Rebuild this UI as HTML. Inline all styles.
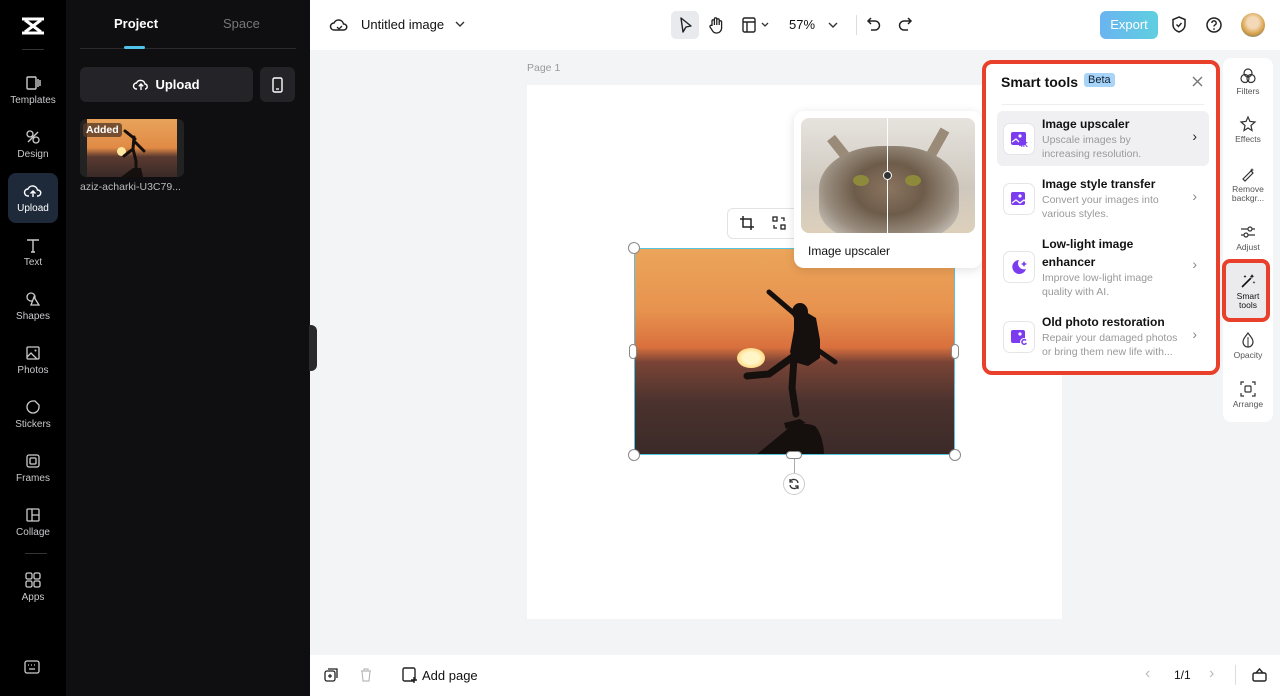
<!DOCTYPE html>
<html><head><meta charset="utf-8"><style>
*{margin:0;padding:0;box-sizing:border-box}
body{width:1280px;height:696px;overflow:hidden;font-family:"Liberation Sans",sans-serif;background:#f3f4f6;position:relative}
.a{position:absolute}
.nav{left:0;top:0;width:66px;height:696px;background:#000}
.ni{position:absolute;left:0;width:66px;text-align:center;color:#c9c9cc;font-size:10px}
.ni svg{display:block;margin:0 auto 4px}
.panel{left:66px;top:0;width:244px;height:696px;background:#0f0f11}
.top{left:310px;top:0;width:970px;height:50px;background:#fff}
.bot{left:310px;top:655px;width:970px;height:41px;background:#fff}
svg{overflow:visible}
.rs{position:absolute;left:0;width:50px;text-align:center;font-size:8.5px;color:#555;line-height:9px}
.rs svg{display:block;margin:0 auto 3px}
.it{position:absolute;left:16px;width:212px;height:55px;border-radius:6px}
.ic{position:absolute;left:6px;top:12px;width:32px;height:32px;border:1px solid #e5e5e8;border-radius:7px;background:#fff}
.t1{position:absolute;left:45px;font-size:12px;color:#111;font-weight:bold;line-height:18px}
.t2{position:absolute;left:45px;font-size:10.5px;color:#999;line-height:14px}
.chev{position:absolute;right:12px;font-size:14px;color:#888}
</style></head><body>
<div class="a nav">
 <svg class="a" style="left:20px;top:17px" width="26" height="18" viewBox="0 0 26 18"><path d="M2 2h22M2 16h22M5 3l16 12M21 3L5 15" fill="none" stroke="#fff" stroke-width="3"/></svg>
 <div class="a" style="left:22px;top:49px;width:22px;height:1px;background:#333"></div>
 <div class="ni" style="top:75px"><svg width="16" height="16"><rect x="2" y="2" width="9" height="12" rx="1" fill="none" stroke="#ccc" stroke-width="1.4"/><path d="M13 4v8M15 5v6" stroke="#ccc" stroke-width="1.4"/></svg>Templates</div>
 <div class="ni" style="top:129px"><svg width="16" height="16"><circle cx="5" cy="5" r="3" fill="none" stroke="#ccc" stroke-width="1.3"/><circle cx="11" cy="11" r="3" fill="none" stroke="#ccc" stroke-width="1.3"/><path d="M3 13L13 3" stroke="#ccc" stroke-width="1.3"/></svg>Design</div>
 <div class="a" style="left:8px;top:173px;width:50px;height:50px;border-radius:8px;background:#1e2a3a"></div>
 <div class="ni" style="top:183px;color:#fff"><svg width="18" height="16"><path d="M5 13H4a3.5 3.5 0 010-7 5 5 0 019.5 1A3 3 0 0114 13h-1M9 14V8M6.5 10.5L9 8l2.5 2.5" fill="none" stroke="#fff" stroke-width="1.4"/></svg>Upload</div>
 <div class="ni" style="top:237px"><svg width="16" height="16"><path d="M2 3h12M8 3v12M6 15h4" stroke="#ccc" stroke-width="1.4" fill="none"/></svg>Text</div>
 <div class="ni" style="top:291px"><svg width="16" height="16"><circle cx="6" cy="6" r="4" fill="none" stroke="#ccc" stroke-width="1.3"/><path d="M9 6l5 8H6z" fill="#000" stroke="#ccc" stroke-width="1.3"/></svg>Shapes</div>
 <div class="ni" style="top:345px"><svg width="16" height="16"><rect x="2" y="2" width="12" height="12" rx="1" fill="none" stroke="#ccc" stroke-width="1.3"/><path d="M2 12l4-4 6 6" fill="none" stroke="#ccc" stroke-width="1.3"/><circle cx="10.5" cy="5.5" r="1" fill="#ccc"/></svg>Photos</div>
 <div class="ni" style="top:399px"><svg width="16" height="16"><path d="M14 8A6 6 0 118 2h2l4 4z" fill="none" stroke="#ccc" stroke-width="1.3"/></svg>Stickers</div>
 <div class="ni" style="top:453px"><svg width="16" height="16"><rect x="2" y="2" width="12" height="12" rx="2" fill="none" stroke="#ccc" stroke-width="1.3"/><rect x="5" y="5" width="6" height="6" rx="1" fill="none" stroke="#ccc" stroke-width="1.3"/></svg>Frames</div>
 <div class="ni" style="top:507px"><svg width="16" height="16"><rect x="2" y="2" width="12" height="12" rx="1" fill="none" stroke="#ccc" stroke-width="1.3"/><path d="M7 2v12M7 8h7" stroke="#ccc" stroke-width="1.3"/></svg>Collage</div>
 <div class="a" style="left:25px;top:553px;width:22px;height:1px;background:#333"></div>
 <div class="ni" style="top:572px"><svg width="16" height="16"><rect x="1" y="1" width="6" height="6" rx="1.5" fill="none" stroke="#ccc" stroke-width="1.3"/><rect x="9" y="1" width="6" height="6" rx="1.5" fill="none" stroke="#ccc" stroke-width="1.3"/><rect x="1" y="9" width="6" height="6" rx="1.5" fill="none" stroke="#ccc" stroke-width="1.3"/><rect x="9" y="9" width="6" height="6" rx="1.5" fill="none" stroke="#ccc" stroke-width="1.3"/></svg>Apps</div>
 <svg class="a" style="left:24px;top:660px" width="16" height="14"><rect x="1" y="1" width="14" height="12" rx="2" fill="none" stroke="#ccc" stroke-width="1.3"/><path d="M4 5h1M7 5h1M10 5h1M5 9h6" stroke="#ccc" stroke-width="1.3"/></svg>
</div>
<div class="a panel">
 <div class="a" style="left:48px;top:16px;font-size:13px;font-weight:bold;color:#fff">Project</div>
 <div class="a" style="left:157px;top:16px;font-size:13px;color:#777">Space</div>
 <div class="a" style="left:14px;top:48px;width:216px;height:1px;background:#2a2a2e"></div>
 <div class="a" style="left:58px;top:46px;width:21px;height:3px;border-radius:2px;background:#4fc3e8"></div>
 <div class="a" style="left:14px;top:67px;width:173px;height:35px;border-radius:6px;background:#242428;color:#fff;font-size:13px;font-weight:bold;line-height:35px;text-align:center"><svg width="16" height="14" style="vertical-align:-2px;margin-right:6px"><path d="M4 12H3.5a3 3 0 010-6 4.5 4.5 0 018.5 1A2.6 2.6 0 0112.5 12H12M8 13V7M5.8 9.2L8 7l2.2 2.2" fill="none" stroke="#fff" stroke-width="1.4"/></svg>Upload</div>
 <div class="a" style="left:194px;top:67px;width:35px;height:35px;border-radius:6px;background:#242428"><svg class="a" style="left:12px;top:10px" width="11" height="16"><rect x="1" y="1" width="9" height="14" rx="1.5" fill="none" stroke="#fff" stroke-width="1.4"/><path d="M4 12h3" stroke="#fff" stroke-width="1.3"/></svg></div>
 <div class="a" style="left:14px;top:119px;width:104px;height:58px;border-radius:6px;background:#222;overflow:hidden">
  <div class="a" style="left:7px;top:0;width:90px;height:58px;background:linear-gradient(#e8a35a 0%,#e08a45 50%,#5a3a30 65%,#3a2a28 100%)"></div>
  <div class="a" style="left:37px;top:28px;width:9px;height:9px;border-radius:50%;background:#ffe9a0"></div>
  <svg class="a" style="left:7px;top:0" width="90" height="58"><path d="M34 58l12-9 8 0 2 9z" fill="#150f0e"/><path d="M38 12l10 8M47 18l-1 12 3 12 0 7M46 30l-9 7M47 22l10 10" stroke="#150f0e" stroke-width="3" fill="none" stroke-linecap="round"/></svg>
  <div class="a" style="left:3px;top:4px;padding:1px 3px;background:rgba(90,60,40,.8);border-radius:3px;color:#fff;font-size:10.5px;font-weight:bold">Added</div>
 </div>
 <div class="a" style="left:14px;top:181px;font-size:10.5px;color:#bbb">aziz-acharki-U3C79...</div>
 <div class="a" style="left:243px;top:325px;width:8px;height:46px;background:#2a2a2e;border-radius:0 6px 6px 0"></div>
</div>
<div class="a top">
 <svg class="a" style="left:20px;top:17px" width="18" height="16"><path d="M5 13H4a3.5 3.5 0 010-7 5 5 0 019.5 1A3 3 0 0114 13H5" fill="none" stroke="#222" stroke-width="1.5"/><path d="M7 10l2 2 3-3" fill="none" stroke="#222" stroke-width="1.3"/></svg>
 <div class="a" style="left:51px;top:17px;font-size:13px;color:#111">Untitled image</div>
 <svg class="a" style="left:145px;top:21px" width="10" height="6"><path d="M1 1l4 4 4-4" fill="none" stroke="#333" stroke-width="1.4"/></svg>
 <div class="a" style="left:361px;top:11px;width:28px;height:28px;border-radius:5px;background:#e8eaee"></div>
 <svg class="a" style="left:369px;top:17px" width="14" height="16"><path d="M2 1l10 8-5 1-3 5z" fill="none" stroke="#222" stroke-width="1.4" stroke-linejoin="round"/></svg>
 <svg class="a" style="left:398px;top:16px" width="16" height="18"><path d="M4 10V5a1.2 1.2 0 012.4 0v4V3a1.2 1.2 0 012.4 0v6V4a1.2 1.2 0 012.4 0v5-3a1.2 1.2 0 012.4 0v6a5 5 0 01-5 5H8a4 4 0 01-3-1.5L2 11a1.3 1.3 0 012-1.5z" fill="none" stroke="#222" stroke-width="1.3"/></svg>
 <svg class="a" style="left:432px;top:17px" width="30" height="16"><rect x="1" y="1" width="12" height="14" rx="1.5" fill="none" stroke="#222" stroke-width="1.4"/><path d="M1 5h12M5 5v10" stroke="#222" stroke-width="1.4"/><path d="M20 6l3 3 3-3" fill="none" stroke="#333" stroke-width="1.3"/></svg>
 <div class="a" style="left:479px;top:17px;font-size:13px;color:#111">57%</div>
 <svg class="a" style="left:518px;top:22px" width="10" height="6"><path d="M1 1l4 4 4-4" fill="none" stroke="#333" stroke-width="1.4"/></svg>
 <div class="a" style="left:546px;top:15px;width:1px;height:20px;background:#ddd"></div>
 <svg class="a" style="left:557px;top:16px" width="14" height="16"><path d="M4 2L1 5l3 3M1 5h7a4.5 4.5 0 010 9H4" fill="none" stroke="#222" stroke-width="1.5"/></svg>
 <svg class="a" style="left:588px;top:16px" width="14" height="16"><path d="M10 2l3 3-3 3M13 5H6a4.5 4.5 0 000 9h4" fill="none" stroke="#222" stroke-width="1.5"/></svg>
 <div class="a" style="left:790px;top:11px;width:58px;height:28px;border-radius:6px;background:linear-gradient(90deg,#6ab4f0,#5fcfe0);color:#fff;font-size:13px;line-height:28px;text-align:center">Export</div>
 <svg class="a" style="left:862px;top:16px" width="14" height="17"><path d="M7 1l6 2.5v5c0 4-3 6.5-6 7.5-3-1-6-3.5-6-7.5v-5z" fill="none" stroke="#222" stroke-width="1.5"/><path d="M4.5 8.5l2 2 3-3.5" fill="none" stroke="#222" stroke-width="1.4"/></svg>
 <svg class="a" style="left:896px;top:17px" width="16" height="16"><circle cx="8" cy="8" r="7" fill="none" stroke="#222" stroke-width="1.5"/><path d="M5.8 6a2.2 2.2 0 114 1.3c-.9.7-1.8 1-1.8 2.2" fill="none" stroke="#222" stroke-width="1.4"/><circle cx="8" cy="12" r=".9" fill="#222"/></svg>
 <div class="a" style="left:931px;top:13px;width:24px;height:24px;border-radius:50%;background:radial-gradient(circle at 50% 40%,#f3d9b8 30%,#d8a24a 60%,#4a6a8a)"></div>
</div>
<div class="a" style="left:527px;top:62px;font-size:10.5px;color:#999">Page 1</div>
<div class="a" style="left:527px;top:85px;width:535px;height:534px;background:#fff"></div>
<!-- image -->
<div class="a" style="left:634px;top:248px;width:321px;height:207px;background:linear-gradient(#eba55a 0%,#e7934f 30%,#d9703e 48%,#7a4436 55%,#4a322e 75%,#3b2a28 100%);overflow:hidden">
 <div class="a" style="left:103px;top:100px;width:28px;height:20px;border-radius:50%;background:radial-gradient(#fff6c8 40%,#ffd070 80%,transparent 100%)"></div>
 <svg class="a" style="left:0;top:0" width="321" height="207">
  <path d="M122 207l34-28c8-4 22-4 26 0 6 8 8 20 8 28z" fill="#150f0e"/>
  <g stroke="#150f0e" fill="none" stroke-linecap="round" stroke-linejoin="round">
   <path d="M135 44l28 24" stroke-width="5"/>
   <path d="M168 72l10 26 23 16" stroke-width="5"/>
   <path d="M160 108l-25 18-22 2" stroke-width="7"/>
   <path d="M160 110l-2 30 4 26" stroke-width="7"/>
  </g>
  <path d="M160 64l12 0 10 6 4 22 0 18-12 8-14-4-4-10 4-22z" fill="#150f0e"/>
  <ellipse cx="166" cy="64" rx="8" ry="9" fill="#150f0e"/>
  <path d="M150 175l16-4 6 4-20 6z" fill="#150f0e"/>
 </svg>
 <div class="a" style="left:0;top:0;right:0;bottom:0;border:1.5px solid #55c3e0"></div>
</div>
<div class="a" style="left:628px;top:242px;width:12px;height:12px;border-radius:50%;background:#fff;border:1px solid #888"></div>
<div class="a" style="left:949px;top:449px;width:12px;height:12px;border-radius:50%;background:#fff;border:1px solid #888"></div>
<div class="a" style="left:628px;top:449px;width:12px;height:12px;border-radius:50%;background:#fff;border:1px solid #888"></div>
<div class="a" style="left:629px;top:344px;width:8px;height:15px;border-radius:4px;background:#fff;border:1px solid #888"></div>
<div class="a" style="left:951px;top:344px;width:8px;height:15px;border-radius:4px;background:#fff;border:1px solid #888"></div>
<div class="a" style="left:786px;top:451px;width:16px;height:8px;border-radius:4px;background:#fff;border:1px solid #888"></div>
<div class="a" style="left:794px;top:459px;width:1px;height:14px;background:#aaa"></div>
<div class="a" style="left:783px;top:473px;width:22px;height:22px;border-radius:50%;background:#fff;border:1px solid #ccc"><svg class="a" style="left:4px;top:4px" width="12" height="12"><path d="M10 5A4.2 4.2 0 002 4M2 7a4.2 4.2 0 008 1M2 1v3h3M10 11V8H7" fill="none" stroke="#333" stroke-width="1.3"/></svg></div>
<div class="a" style="left:727px;top:208px;width:90px;height:31px;border-radius:6px;background:#fff;border:1px solid #e3e3e6"></div>
<svg class="a" style="left:740px;top:216px" width="14" height="14"><path d="M3 0v11h11M0 3h11v11" fill="none" stroke="#222" stroke-width="1.5"/></svg>
<svg class="a" style="left:772px;top:216px" width="14" height="14"><rect x="1" y="1" width="4" height="4" fill="none" stroke="#222" stroke-width="1.3"/><rect x="9" y="9" width="4" height="4" fill="none" stroke="#222" stroke-width="1.3"/><path d="M9 2h3v3M5 12H2V9" fill="none" stroke="#222" stroke-width="1.3"/></svg>
<!-- cat popup -->
<div class="a" style="left:794px;top:111px;width:188px;height:157px;border-radius:10px;background:#fff;box-shadow:0 2px 10px rgba(0,0,0,.12)">
 <div class="a" style="left:7px;top:7px;width:174px;height:115px;border-radius:8px;overflow:hidden;background:linear-gradient(#e6e3de,#cfc8be 60%,#ddd0bb)">
  <svg class="a" style="left:0;top:0" width="174" height="115"><path d="M30 20l20 25M144 12l-18 32" stroke="#9a8a78" stroke-width="10"/></svg>
  <div class="a" style="left:18px;top:28px;width:140px;height:95px;border-radius:45% 45% 35% 35%;background:radial-gradient(ellipse at 50% 45%,#8a7460 0%,#6e5c4a 35%,#9a8e80 65%,#bdb4aa 80%,transparent 82%)"></div>
  <div class="a" style="left:52px;top:57px;width:16px;height:11px;border-radius:50%;background:#8e8a3c"></div>
  <div class="a" style="left:104px;top:57px;width:16px;height:11px;border-radius:50%;background:#8e8a3c"></div>
  <div class="a" style="left:86px;top:0;width:1px;height:115px;background:#fff"></div>
  <div class="a" style="left:82px;top:53px;width:9px;height:9px;border-radius:50%;border:1.5px solid #fff;background:#333"></div>
 </div>
 <div class="a" style="left:14px;top:133px;font-size:12px;color:#111">Image upscaler</div>
</div>
<!-- smart tools panel -->
<div class="a" style="left:982px;top:60px;width:238px;height:315px;border:4px solid #e8402a;border-radius:10px;background:#fff">
 <div class="a" style="left:15px;top:10px;font-size:14px;font-weight:bold;color:#111">Smart tools</div>
 <div class="a" style="left:98px;top:9px;padding:1px 4px;background:#a8d4fa;border-radius:3px;font-size:11px;color:#123">Beta</div>
 <svg class="a" style="left:206px;top:12px" width="11" height="11"><path d="M1 1l9 9M10 1l-9 9" stroke="#777" stroke-width="1.4"/></svg>
 <div class="a" style="left:16px;top:40px;width:202px;height:1px;background:#eee"></div>
 <div class="it" style="top:47px;left:11px;background:#f0f0f2">
  <div class="ic"><svg class="a" style="left:6px;top:6px" width="19" height="19"><rect x="1" y="2" width="15" height="13" rx="2" fill="#7b3cf0"/><circle cx="10" cy="6" r="1.6" fill="#fff"/><path d="M2 12l4-3 3 3" fill="none" stroke="#fff" stroke-width="1.3"/><text x="9" y="17" font-size="7" font-weight="bold" fill="#7b3cf0" font-family="Liberation Sans">4K</text></svg></div>
  <div class="t1" style="top:4px">Image upscaler</div>
  <div class="t2" style="top:22px">Upscale images by<br>increasing resolution.</div>
  <div class="chev" style="top:17px;color:#222">›</div>
 </div>
 <div class="it" style="top:107px;left:11px">
  <div class="ic"><svg class="a" style="left:6px;top:6px" width="19" height="19"><rect x="1" y="2" width="14" height="13" rx="2" fill="#7b3cf0"/><circle cx="10" cy="6" r="1.6" fill="#fff"/><path d="M2 13l4-3 4 3 4-3 4 3" fill="none" stroke="#fff" stroke-width="1.3"/></svg></div>
  <div class="t1" style="top:4px">Image style transfer</div>
  <div class="t2" style="top:22px">Convert your images into<br>various styles.</div>
  <div class="chev" style="top:17px">›</div>
 </div>
 <div class="it" style="top:167px;left:11px;height:72px">
  <div class="ic" style="top:20px"><svg class="a" style="left:6px;top:6px" width="19" height="19"><path d="M9 2a7 7 0 107 9A6 6 0 019 2z" fill="#7b3cf0"/><path d="M14 3l1 2 2 1-2 1-1 2-1-2-2-1 2-1z" fill="#7b3cf0"/></svg></div>
  <div class="t1" style="top:4px">Low-light image<br>enhancer</div>
  <div class="t2" style="top:40px">Improve low-light image<br>quality with AI.</div>
  <div class="chev" style="top:25px">›</div>
 </div>
 <div class="it" style="top:245px;left:11px">
  <div class="ic"><svg class="a" style="left:6px;top:6px" width="19" height="19"><rect x="1" y="2" width="14" height="13" rx="2" fill="#7b3cf0"/><circle cx="10" cy="6" r="1.6" fill="#fff"/><circle cx="14" cy="14" r="4" fill="#fff"/><path d="M16 12.5a2.3 2.3 0 10.3 2.5" fill="none" stroke="#7b3cf0" stroke-width="1.5"/></svg></div>
  <div class="t1" style="top:4px">Old photo restoration</div>
  <div class="t2" style="top:22px">Repair your damaged photos<br>or bring them new life with...</div>
  <div class="chev" style="top:17px">›</div>
 </div>
</div>
<!-- right strip -->
<div class="a" style="left:1223px;top:58px;width:50px;height:364px;border-radius:8px;background:#fff">
 <div class="rs" style="top:10px"><svg width="16" height="16"><circle cx="8" cy="5" r="4" fill="none" stroke="#333" stroke-width="1.2"/><circle cx="5" cy="10.5" r="4" fill="none" stroke="#333" stroke-width="1.2"/><circle cx="11" cy="10.5" r="4" fill="none" stroke="#333" stroke-width="1.2"/></svg>Filters</div>
 <div class="rs" style="top:58px"><svg width="16" height="16"><path d="M8 1l2 4.5 5 .5-4 3.5 1 5-4-2.5-4 2.5 1-5-4-3.5 5-.5z" fill="none" stroke="#333" stroke-width="1.2"/></svg>Effects</div>
 <div class="rs" style="top:108px"><svg width="16" height="16"><path d="M3 13l8-8 2 2-8 8z" fill="none" stroke="#333" stroke-width="1.2"/><path d="M12 2l.6 1.4L14 4l-1.4.6L12 6l-.6-1.4L10 4l1.4-.6z" fill="#333"/></svg>Remove<br>backgr...</div>
 <div class="rs" style="top:166px"><svg width="16" height="16"><path d="M1 5h14M1 11h14" stroke="#333" stroke-width="1.2"/><circle cx="10" cy="5" r="2" fill="#fff" stroke="#333" stroke-width="1.2"/><circle cx="6" cy="11" r="2" fill="#fff" stroke="#333" stroke-width="1.2"/></svg>Adjust</div>
 <div class="a" style="left:-1px;top:201px;width:48px;height:63px;border:4px solid #e8402a;border-radius:8px;background:#ebebee"></div>
 <div class="rs" style="top:215px;color:#111"><svg width="16" height="16"><path d="M2 14l9-9" stroke="#111" stroke-width="1.6"/><path d="M12 1l.7 1.5 1.5.7-1.5.7L12 5.5l-.7-1.5-1.5-.7 1.5-.7zM5 2l.5 1 1 .5-1 .5L5 5l-.5-1-1-.5 1-.5zM14 8l.4 1 1 .4-1 .4-.4 1-.4-1-1-.4 1-.4z" fill="#111"/></svg>Smart<br>tools</div>
 <div class="rs" style="top:274px"><svg width="16" height="16"><path d="M8 1c3 4 5 6 5 9a5 5 0 01-10 0c0-3 2-5 5-9z" fill="none" stroke="#333" stroke-width="1.2"/><path d="M8 5v10" stroke="#333" stroke-width="1"/></svg>Opacity</div>
 <div class="rs" style="top:323px"><svg width="16" height="16"><path d="M1 4V1h3M12 1h3v3M15 12v3h-3M4 15H1v-3" fill="none" stroke="#333" stroke-width="1.2"/><rect x="5" y="5" width="6" height="6" rx="1" fill="none" stroke="#333" stroke-width="1.2"/></svg>Arrange</div>
</div>
<!-- bottom -->
<div class="a bot">
 <svg class="a" style="left:14px;top:13px" width="14" height="14"><rect x="1" y="3" width="10" height="10" rx="2" fill="none" stroke="#222" stroke-width="1.3"/><path d="M4 1h9v9" fill="none" stroke="#222" stroke-width="1.3"/><path d="M6 6v4M4 8h4" stroke="#222" stroke-width="1.2"/></svg>
 <svg class="a" style="left:50px;top:13px" width="12" height="14"><path d="M1 3h10M4 3V1h4v2M2 3l1 10h6l1-10" fill="none" stroke="#bbb" stroke-width="1.2"/></svg>
 <svg class="a" style="left:92px;top:12px" width="16" height="16"><rect x="1" y="1" width="12" height="13" rx="1.5" fill="none" stroke="#222" stroke-width="1.4"/><path d="M12 10v6M9 13h6" stroke="#222" stroke-width="1.4"/></svg>
 <div class="a" style="left:112px;top:13px;font-size:13px;color:#111">Add page</div>
 <div class="a" style="left:835px;top:10px;font-size:16px;color:#bbb">‹</div>
 <div class="a" style="left:864px;top:13px;font-size:12px;color:#111">1/1</div>
 <div class="a" style="left:899px;top:10px;font-size:16px;color:#bbb">›</div>
 <div class="a" style="left:925px;top:10px;width:1px;height:20px;background:#ddd"></div>
 <svg class="a" style="left:942px;top:13px" width="15" height="14"><rect x="1" y="5" width="13" height="8" rx="1.5" fill="none" stroke="#222" stroke-width="1.4"/><path d="M4 5l3.5-4L11 5" fill="none" stroke="#222" stroke-width="1.4"/></svg>
</div>
</body></html>
